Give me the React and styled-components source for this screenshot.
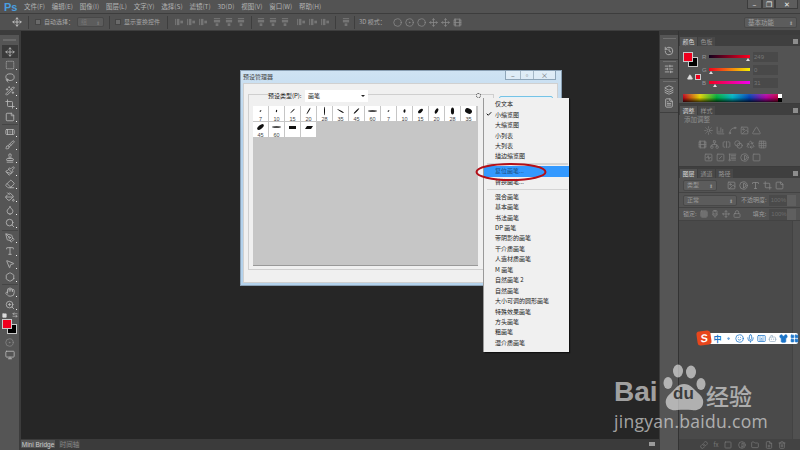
import React from 'react';
import styled, { createGlobalStyle } from 'styled-components';
import {
  Move, SquareDashed, Lasso, WandSparkles, Crop, StickyNote, Bandage, Brush, Stamp, Paintbrush, Eraser,
  PaintBucket, Droplet, Search, PenTool, Type, MousePointer2, Hexagon, Hand, ZoomIn, ArrowLeftRight,
  CircleDot, Monitor, History, SlidersHorizontal, Layers, FileText, Sun, ChartColumn, Spline, Image,
  Triangle, Film, Network, SquareSplitHorizontal, Blend, Recycle, Grid3x3, SquareActivity, SquareSlash,
  Contrast, Blinds, Link, Circle, Folder, FilePlus, Trash2, Lock, Paintbrush2, Square, Check, Smile, Mic,
  Keyboard, Shirt, LayoutGrid, Bot, Dot,
} from 'lucide-react';

const GlobalStyle = createGlobalStyle`
  html, body { margin: 0; padding: 0; background: #262626; }
  body { font-family: "Noto Sans CJK SC", "Noto Sans", sans-serif; }
  * { box-sizing: border-box; }
`;

const Page = styled.div`
  position: relative;
  width: 800px;
  height: 450px;
  overflow: hidden;
  display: flex;
  flex-direction: column;
  background: #535353;
  color: #c4c4c4;
  font-size: 6px;
  line-height: 1;
`;

const MenuBar = styled.div`
  height: 13px;
  display: flex;
  align-items: center;
  padding-left: 4px;
  background: #535353;
  font-size: 6.5px;
`;

const Logo = styled.span`
  width: 20px;
  font: bold 11px "Liberation Sans", sans-serif;
  color: #4a9fe0;
`;

const MenuItem = styled.span`
  margin-right: 6.8px;
  white-space: nowrap;
  color: #b4b4b4;
`;

const WindowControls = styled.div`
  margin-left: auto;
  margin-right: 2px;
  align-self: flex-start;
  height: 9px;
  display: flex;
`;

const WindowControl = styled.div`
  width: ${p => p.$w}px;
  display: flex;
  align-items: center;
  justify-content: center;
  background: #5d5d5d;
  border: 1px solid #3c3c3c;
  border-top: 0;
  color: #eee;
  font-size: 7px;
`;

const OptionsBar = styled.div`
  height: 18px;
  display: flex;
  align-items: center;
  padding-left: 12px;
  background: #515151;
  border-top: 1px solid #3d3d3d;
  border-bottom: 1px solid #3d3d3d;
  color: #a8a8a8;
`;

const Divider = styled.div`
  width: 1px;
  height: 13px;
  margin: 0 ${p => p.$gap ?? 5}px;
  background: #3e3e3e;
`;

const CheckBox = styled.div`
  width: 6px;
  height: 6px;
  margin-right: 3px;
  background: #6a6a6a;
  border: 1px solid #454545;
`;

const OptionLabel = styled.span`
  margin-left: ${p => p.$ml ?? 0}px;
  white-space: nowrap;
`;

const DropDown = styled.div`
  width: ${p => p.$w}px;
  height: ${p => p.$h ?? 10}px;
  margin-left: ${p => p.$ml ?? 0}px;
  padding: 0 3px;
  display: flex;
  align-items: center;
  justify-content: space-between;
  background: #5c5c5c;
  border: 1px solid #484848;
  border-radius: 2px;
  color: ${p => p.$color ?? '#9a9a9a'};
  &::after { content: '⬍'; font-size: 5px; }
`;

const AlignGroup = styled.div`
  display: flex;
  gap: 4px;
  margin-right: ${p => p.$mr ?? 0}px;
`;

const AlignMark = styled.svg`
  width: 8px;
  height: 8px;
  fill: #757575;
  transform: rotate(${p => p.$turn ?? 0}deg);
`;

const OptionIcons = styled.div`
  display: flex;
  gap: 3px;
  margin-left: 7px;
  color: #8c8c8c;
`;

const WorkspaceDrop = styled(DropDown)`
  margin-left: auto;
  margin-right: 3px;
  font-size: 6.5px;
`;

const Workspace = styled.div`
  flex: 1;
  min-height: 0;
  display: flex;
`;

const Toolbar = styled.div`
  width: 21px;
  display: flex;
  flex-direction: column;
  align-items: center;
  background: #555;
  border-right: 2px solid #3c3c3c;
`;

const GripStrip = styled.div`
  align-self: stretch;
  height: 4px;
  flex: none;
  background: #3c3c3c;
`;

const ToolHandle = styled.div`
  width: 13px;
  height: 2px;
  margin: 4px 0 4px;
  flex: none;
  background: #6a6a6a;
`;

const ToolGroup = styled.div`
  display: flex;
  flex-direction: column;
  padding-bottom: 1px;
  border-bottom: ${p => (p.$last ? '0' : '1px solid #454545')};
`;

const ToolButton = styled.div`
  position: relative;
  width: 16px;
  height: 13px;
  display: flex;
  align-items: center;
  justify-content: center;
  color: #b8b8b8;
  background: ${p => (p.$active ? '#3a3a3a' : 'transparent')};
  &::after {
    content: '';
    display: ${p => (p.$more ? 'block' : 'none')};
    position: absolute;
    right: 1px;
    bottom: 1px;
    width: 1px;
    height: 1px;
    background: #eee;
  }
`;

const MiniColors = styled.div`
  width: 16px;
  height: 6px;
  display: flex;
  justify-content: space-between;
  align-items: center;
  color: #ddd;
`;

const ColorPair = styled.div`
  position: relative;
  width: ${p => p.$size * 1.55}px;
  height: ${p => p.$size * 1.55}px;
  margin: ${p => p.$margin};
  flex: none;
`;

const ColorChip = styled.div`
  position: absolute;
  width: ${p => p.$size}px;
  height: ${p => p.$size}px;
  left: ${p => p.$offset}px;
  top: ${p => p.$offset}px;
  background: ${p => p.$color};
  border: 1px solid #c8c8c8;
`;

const CanvasColumn = styled.div`
  flex: 1;
  min-width: 0;
  display: flex;
  flex-direction: column;
`;

const Stage = styled.div`
  position: relative;
  flex: 1;
  background: #262626;
`;

const BottomTabs = styled.div`
  height: 11px;
  display: flex;
  align-items: flex-end;
  gap: 4px;
  padding-bottom: 2px;
  background: #3b3b3b;
  font: 6.5px "Liberation Sans", "Noto Sans CJK SC", sans-serif;
`;

const BottomTab = styled.div`
  width: ${p => p.$w}px;
  height: 8px;
  display: flex;
  align-items: center;
  justify-content: center;
  background: ${p => (p.$active ? '#535353' : '#444')};
  color: ${p => (p.$active ? '#ccc' : '#888')};
`;

const BottomMenu = styled.div`
  margin-left: auto;
  margin-right: 4px;
  width: 6px;
  height: 4px;
  margin-bottom: 2px;
  background: #9a9a9a;
`;

const Dock = styled.div`
  width: 20px;
  display: flex;
  flex-direction: column;
  background: #555;
  border-right: 1px solid #333;
  border-left: 1px solid #3a3a3a;
`;

const DockGroup = styled.div`
  display: flex;
  flex-direction: column;
  align-items: center;
  padding: ${p => p.$pt}px 0 ${p => p.$pb}px;
  border-bottom: 1px solid #3f3f3f;
  color: #b8b8b8;
`;

const DockHandle = styled.div`
  width: 13px;
  height: 1px;
  margin-bottom: ${p => p.$mb}px;
  background: #707070;
`;

const DockSlot = styled.div`
  height: 13px;
  display: flex;
  align-items: center;
`;

const Panels = styled.div`
  width: 121px;
  display: flex;
  flex-direction: column;
  background: #535353;
`;

const TabRow = styled.div`
  height: 11px;
  flex: none;
  display: flex;
  align-items: flex-end;
  padding: 2px 0 0 1px;
  background: #3f3f3f;
`;

const Tab = styled.div`
  width: 17px;
  height: 100%;
  margin-right: 1px;
  display: flex;
  align-items: center;
  justify-content: center;
  background: ${p => (p.$active ? '#535353' : '#484848')};
  color: ${p => (p.$active ? '#d8d8d8' : '#949494')};
`;

const TabMenu = styled.div`
  margin: auto 2px auto auto;
  width: 5px;
  height: 5px;
  background: #8d8d8d;
`;

const ColorBody = styled.div`
  height: 58px;
  flex: none;
  padding: 4px 0 0 4px;
  border-bottom: 1px solid #3c3c3c;
`;

const ColorTop = styled.div`
  height: 41px;
  display: flex;
`;

const SliderColumn = styled.div`
  flex: 1;
  padding-left: 1px;
  display: flex;
  flex-direction: column;
  color: #999;
`;

const SliderRow = styled.div`
  height: 13px;
  display: flex;
  align-items: center;
`;

const ChannelLabel = styled.span`
  width: 7px;
  font-family: "Liberation Sans", sans-serif;
`;

const SliderTrack = styled.div`
  position: relative;
  width: 41px;
  height: 3px;
  margin-right: 3px;
  background: linear-gradient(90deg, ${p => p.$from}, ${p => p.$to});
  &::after {
    content: '';
    position: absolute;
    top: 3px;
    left: ${p => p.$at}px;
    border: 2px solid transparent;
    border-top: 0;
    border-bottom: 3px solid #ddd;
  }
`;

const ValueField = styled.div`
  width: 25px;
  height: 10px;
  padding-left: 1px;
  display: flex;
  align-items: center;
  background: #494949;
  color: #777;
  font-family: "Liberation Sans", sans-serif;
`;

const GamutRow = styled.div`
  display: flex;
  align-items: center;
  gap: 2px;
  padding-left: 4px;
  color: #ddd;
`;

const SwatchColumn = styled.div`
  width: 18px;
  display: flex;
  flex-direction: column;
`;

const SmallRed = styled.div`
  width: 6px;
  height: 6px;
  background: #f0001e;
  border: 1px solid #ccc;
`;

const Spectrum = styled.div`
  position: relative;
  width: 99px;
  height: 8px;
  margin-top: 3px;
  background:
    linear-gradient(180deg, rgba(255,255,255,.12), rgba(0,0,0,0) 45%, rgba(0,0,0,.75)),
    linear-gradient(90deg, #b8001a, #e0d000 17%, #00a838 34%, #00b0c0 50%, #0040b0 67%, #b000a0 84%, #c00020);
  &::after {
    content: '';
    position: absolute;
    top: 0;
    right: 0;
    width: 4px;
    height: 8px;
    background: linear-gradient(180deg, #fff 50%, #000 50%);
  }
`;

const AdjustBody = styled.div`
  height: 52px;
  flex: none;
  border-bottom: 1px solid #3c3c3c;
`;

const AdjustTitle = styled.div`
  height: 9px;
  padding-left: 5px;
  display: flex;
  align-items: center;
  color: #8f8f8f;
  font-size: 6.5px;
`;

const AdjustRow = styled.div`
  height: 13.5px;
  padding-right: 15px;
  display: flex;
  justify-content: center;
  align-items: center;
  gap: 3px;
  color: #828282;
`;

const LayerRow = styled.div`
  height: ${p => p.$h}px;
  flex: none;
  padding-left: 4px;
  display: flex;
  align-items: center;
  border-bottom: 1px solid #434343;
  color: #9c9c9c;
`;

const LayerIcons = styled.div`
  display: flex;
  gap: ${p => p.$gap ?? 3}px;
  margin-left: ${p => p.$ml}px;
  color: #8a8a8a;
`;

const LockedField = styled.div`
  width: 27px;
  height: 11px;
  margin-left: ${p => p.$ml}px;
  padding-left: 2px;
  display: flex;
  align-items: center;
  justify-content: space-between;
  background: #4a4a4a;
  color: #6d6d6d;
  font: 6px "Liberation Sans", sans-serif;
  &::after {
    content: '';
    width: 9px;
    height: 100%;
    background: #5f5f5f;
  }
`;

const LayerList = styled.div`
  flex: 1;
  display: flex;
  justify-content: flex-end;
  background: #4a4a4a;
`;

const LayerScroll = styled.div`
  width: 8px;
  background: #505050;
  border-left: 1px solid #434343;
`;

const LayerFooter = styled.div`
  height: 11px;
  flex: none;
  display: flex;
  align-items: center;
  justify-content: flex-end;
  gap: 5.5px;
  padding-right: 14px;
  background: #434343;
  color: #7b7b7b;
`;

const Dialog = styled.div`
  position: absolute;
  left: 219px;
  top: 39px;
  width: 322px;
  height: 216px;
  padding: 0 3px 2px 2px;
  display: flex;
  flex-direction: column;
  background: linear-gradient(180deg, #cfe3f3, #b4d2ec 30%);
  border: 1px solid #8aa0b4;
  color: #222;
`;

const TitleBar = styled.div`
  height: 12px;
  flex: none;
  display: flex;
  align-items: center;
  color: #444;
`;

const TitleButtons = styled.div`
  margin-left: auto;
  align-self: flex-start;
  margin-right: 2px;
  height: 9px;
  display: flex;
  background: rgba(255,255,255,.35);
  border: 1px solid #8ea5b8;
  border-top: 0;
`;

const TitleButton = styled.div`
  width: ${p => p.$w}px;
  display: flex;
  align-items: center;
  justify-content: center;
  color: #666;
  font-size: 7px;
  border-left: 1px solid #a4b7c6;
  &:first-child { border-left: 0; }
`;

const DialogBody = styled.div`
  flex: 1;
  min-height: 0;
  display: flex;
  padding: 10px 0 12px 4px;
  background: #f0f0f0;
  border: 1px solid #d0d0d0;
`;

const GroupBox = styled.div`
  width: 246px;
  flex: none;
  display: flex;
  flex-direction: column;
  padding: 0 4px 3px 4px;
  border: 1px solid #cfcfcf;
`;

const GroupHeader = styled.div`
  height: 13px;
  margin-top: -6px;
  flex: none;
  display: flex;
  align-items: center;
  padding-left: 15px;
`;

const GroupLegend = styled.span`
  width: 37px;
  background: #f0f0f0;
  white-space: nowrap;
`;

const PresetSelect = styled.div`
  width: 63px;
  height: 12px;
  padding: 0 3px;
  display: flex;
  align-items: center;
  justify-content: space-between;
  background: #fff;
  &::after {
    content: '';
    border: 2px solid transparent;
    border-top: 2px solid #222;
    border-bottom: 0;
  }
`;

const Gear = styled.span`
  margin-left: 108px;
  width: 5px;
  height: 5px;
  background: #f0f0f0;
  border: 1.5px dotted #444;
  border-radius: 50%;
`;

const PresetArea = styled.div`
  flex: 1;
  margin-top: 4px;
  display: flex;
  min-height: 0;
`;

const PresetGrid = styled.div`
  width: 225px;
  display: grid;
  grid-template-columns: repeat(14, 16px);
  grid-auto-rows: 16px;
  align-content: start;
  background: #c6c6c6;
  border-bottom: 1px solid #999;
`;

const PresetCell = styled.div`
  display: flex;
  flex-direction: column;
  align-items: center;
  background: #fff;
  border: 1px solid #c6c6c6;
  border-width: 0 1px 1px 0;
  font: 5.5px "Liberation Sans", sans-serif;
  color: #444;
`;

const BrushTip = styled.svg`
  width: 15px;
  height: 10px;
  flex: none;
  fill: #111;
`;

const PresetScroll = styled.div`
  width: 7px;
  background: #f0f0f0;
`;

const DoneButton = styled.div`
  width: 54px;
  height: 16px;
  margin: 2px 0 0 5px;
  border: 1px solid #75c3e6;
  border-radius: 2px;
  background: #e6f2f9;
`;

const FlyoutMenu = styled.div`
  position: absolute;
  left: 484px;
  top: 98px;
  width: 85px;
  height: 254px;
  padding-top: 1px;
  background: #f0f0f0;
  box-shadow: -1px 0 0 #999, 1px 1px 1px #111;
`;

const FlyoutItem = styled.div`
  position: relative;
  height: 10.45px;
  padding-left: 11px;
  display: flex;
  align-items: center;
  white-space: nowrap;
  color: ${p => (p.$active ? '#1f4f80' : '#222')};
  background: ${p => (p.$active ? '#3399ff' : 'transparent')};
`;

const CheckMark = styled.span`
  position: absolute;
  left: 2px;
  top: 2px;
  color: #111;
`;

const FlyoutRule = styled.div`
  height: 1.5px;
  margin: 1.5px 1px 1.5px 3px;
  background: #d4d4d4;
`;

const RedCircle = styled.svg`
  position: absolute;
  left: 475px;
  top: 162px;
  width: 72px;
  height: 20px;
`;

const ImeBar = styled.div`
  position: absolute;
  left: 698px;
  top: 333px;
  width: 100px;
  height: 11px;
  padding-left: 15.5px;
  display: flex;
  align-items: center;
  gap: 2px;
  background: #fff;
  border-radius: 2px;
  color: #1b74c8;
`;

const ImeLogo = styled.div`
  position: absolute;
  left: -1px;
  top: -2px;
  width: 14px;
  height: 14px;
  display: flex;
  align-items: center;
  justify-content: center;
  background: #e8461c;
  border-radius: 3px;
  color: #fff;
  font: italic bold 11px "Liberation Sans", sans-serif;
  transform: rotate(-8deg);
`;

const ImeSlot = styled.span`
  width: 9px;
  display: flex;
  justify-content: center;
  color: ${p => p.$color ?? 'inherit'};
  font-size: 8px;
  font-weight: 700;
`;

const Watermark = styled.div`
  position: absolute;
  left: 614px;
  top: 364px;
  width: 144px;
  display: flex;
  flex-direction: column;
  color: rgba(225, 225, 225, 0.68);
`;

const WatermarkTop = styled.div`
  height: 47px;
  display: flex;
  align-items: flex-end;
`;

const BaiText = styled.span`
  width: 49px;
  margin-bottom: 5px;
  font: bold 28px/1 "Liberation Sans", sans-serif;
`;

const PawBox = styled.div`
  position: relative;
  width: 43px;
  height: 47px;
  flex: none;
`;

const PawSvg = styled.svg`
  width: 43px;
  height: 47px;
  fill: rgba(225, 225, 225, 0.68);
`;

const PawLabel = styled.span`
  position: absolute;
  left: 10px;
  top: 21px;
  color: #3c3c3c;
  font: bold 17px/1 "Liberation Sans", sans-serif;
`;

const JingyanMark = styled.span`
  margin-bottom: 4px;
  font: 500 23px/1 "Noto Sans CJK SC", sans-serif;
`;

const WatermarkUrl = styled.div`
  margin-top: 2px;
  font: 17.5px/1 "Open Sans", sans-serif;
  letter-spacing: .3px;
  white-space: nowrap;
`;

const menus = ['文件(F)', '编辑(E)', '图像(I)', '图层(L)', '文字(Y)', '选择(S)', '滤镜(T)', '3D(D)', '视图(V)', '窗口(W)', '帮助(H)'];

const toolGroups = [
  [Move, SquareDashed, Lasso, WandSparkles, Crop, StickyNote],
  [Bandage, Brush, Stamp, Paintbrush, Eraser, PaintBucket, Droplet, Search],
  [PenTool, Type, MousePointer2, Hexagon],
  [Hand, ZoomIn],
];

const adjustRows = [
  [Sun, ChartColumn, Spline, Image, Triangle],
  [Film, Network, SquareSplitHorizontal, Blend, Recycle, Grid3x3],
  [SquareActivity, SquareSlash, Blinds, Contrast, Square],
];

const brushes = [
  [7, 1, 0.6, -40], [10, 1.3, 0.6, -75], [15, 3, 0.5, -45], [20, 3.6, 0.5, -60], [28, 4.2, 0.5, 90],
  [35, 3.8, 0.5, 30], [45, 3.8, 0.6, -45], [60, 4.6, 0.7, 0], [7, 1, 0.6, -40], [10, 1.7, 1, -80],
  [15, 3, 1.5, -40], [20, 3, 1.4, -60], [28, 3.6, 1.6, 90], [35, 3.6, 2.6, 25], [45, 4, 1.8, -40], [60, 4.6, 0.8, 0],
];

const flyoutTop = [{ t: '仅文本' }, { t: '小缩览图', checked: true }, { t: '大缩览图' }, { t: '小列表' }, { t: '大列表' }, { t: '描边缩览图' }];
const flyoutSets = ['混合画笔', '基本画笔', '书法画笔', 'DP 画笔', '带阴影的画笔', '干介质画笔', '人造材质画笔', 'M 画笔', '自然画笔 2', '自然画笔', '大小可调的圆形画笔', '特殊效果画笔', '方头画笔', '粗画笔', '湿介质画笔'];

const AlignIcon = ({ turn }) => (
  <AlignMark viewBox="0 0 9 9" $turn={turn}>
    <rect x="0" y="1" width="1" height="7" />
    <rect x="2" y="1" width="3" height="7" />
    <rect x="6" y="3" width="3" height="3" />
  </AlignMark>
);

const AlignSet = ({ turn, mr }) => (
  <AlignGroup $mr={mr}>
    {[0, 1, 2].map(i => <AlignIcon key={i} turn={turn} />)}
  </AlignGroup>
);

const App = () => (
  <Page>
    <GlobalStyle />
    <MenuBar>
      <Logo>Ps</Logo>
      {menus.map(m => <MenuItem key={m}>{m}</MenuItem>)}
      <WindowControls>
        <WindowControl $w={15}>–</WindowControl>
        <WindowControl $w={13}>❐</WindowControl>
        <WindowControl $w={23}>✕</WindowControl>
      </WindowControls>
    </MenuBar>

    <OptionsBar>
      <Move size={10} color="#c8c8c8" />
      <Divider $gap={6} />
      <CheckBox />
      <OptionLabel>自动选择：</OptionLabel>
      <DropDown $w={27} $ml={3} $color="#777">组</DropDown>
      <Divider $gap={5} />
      <CheckBox />
      <OptionLabel>显示变换控件</OptionLabel>
      <Divider $gap={7} />
      <AlignSet turn={0} mr={6} />
      <AlignSet turn={90} />
      <Divider $gap={5.5} />
      <AlignSet turn={90} mr={8} />
      <AlignSet turn={0} />
      <Divider $gap={6} />
      <AlignGroup><AlignIcon turn={90} /></AlignGroup>
      <Divider $gap={4} />
      <OptionLabel>3D 模式：</OptionLabel>
      <OptionIcons>
        <Circle size={9} />
        <CircleDot size={9} />
        <Circle size={9} />
        <Move size={9} />
        <Move size={9} />
        <Film size={9} />
      </OptionIcons>
      <WorkspaceDrop $w={53} $h={11} $color="#a0a0a0">基本功能</WorkspaceDrop>
    </OptionsBar>

    <Workspace>
      <Toolbar>
        <GripStrip />
        <ToolHandle />
        {toolGroups.map((group, g) => (
          <ToolGroup key={g} $last={g === toolGroups.length - 1}>
            {group.map((Icon, i) => (
              <ToolButton key={i} $active={g === 0 && i === 0} $more={i > 0 || g > 0}>
                <Icon size={10} strokeWidth={2} />
              </ToolButton>
            ))}
          </ToolGroup>
        ))}
        <MiniColors>
          <Square size={5} fill="#ddd" />
          <ArrowLeftRight size={6} />
        </MiniColors>
        <ColorPair $size={10} $margin="1px 0 1px 0">
          <ColorChip $size={10} $offset={5} $color="#000" />
          <ColorChip $size={10} $offset={0} $color="#f0001e" />
        </ColorPair>
        <ToolButton><CircleDot size={9} color="#888" /></ToolButton>
        <ToolButton><Monitor size={10} /></ToolButton>
      </Toolbar>

      <CanvasColumn>
        <Stage>
          <Dialog>
            <TitleBar>
              预设管理器
              <TitleButtons>
                <TitleButton $w={14}>–</TitleButton>
                <TitleButton $w={13}>▫</TitleButton>
                <TitleButton $w={22}>×</TitleButton>
              </TitleButtons>
            </TitleBar>
            <DialogBody>
              <GroupBox>
                <GroupHeader>
                  <GroupLegend>预设类型(P):</GroupLegend>
                  <PresetSelect>画笔</PresetSelect>
                  <Gear />
                </GroupHeader>
                <PresetArea>
                  <PresetGrid>
                    {brushes.map(([size, rx, ry, angle], i) => (
                      <PresetCell key={i}>
                        <BrushTip viewBox="0 0 15 10">
                          <ellipse cx="7.5" cy="5" rx={rx} ry={ry} transform={`rotate(${angle} 7.5 5)`} />
                        </BrushTip>
                        {size}
                      </PresetCell>
                    ))}
                    <PresetCell>
                      <BrushTip viewBox="0 0 15 10"><rect x="4" y="4" width="7" height="3" /></BrushTip>
                    </PresetCell>
                    <PresetCell>
                      <BrushTip viewBox="0 0 15 10"><polygon points="4,7 6,4 12,4 10,7" /></BrushTip>
                    </PresetCell>
                  </PresetGrid>
                  <PresetScroll />
                </PresetArea>
              </GroupBox>
              <DoneButton />
            </DialogBody>
          </Dialog>
        </Stage>
        <BottomTabs>
          <BottomTab $w={34} $active>Mini Bridge</BottomTab>
          <BottomTab $w={21}>时间轴</BottomTab>
          <BottomMenu />
        </BottomTabs>
      </CanvasColumn>

      <Dock>
        <GripStrip />
        <DockGroup $pt={3} $pb={2}><DockHandle $mb={5} /><DockSlot><History size={10} /></DockSlot></DockGroup>
        <DockGroup $pt={1} $pb={3}><DockHandle $mb={0} /><DockSlot><SlidersHorizontal size={10} /></DockSlot></DockGroup>
        <DockGroup $pt={2} $pb={3}>
          <DockHandle $mb={1} />
          <DockSlot><Layers size={10} /></DockSlot>
          <DockSlot><FileText size={10} /></DockSlot>
        </DockGroup>
      </Dock>

      <Panels>
        <GripStrip />
        <TabRow>
          <Tab $active>颜色</Tab>
          <Tab>色板</Tab>
          <TabMenu />
        </TabRow>
        <ColorBody>
          <ColorTop>
            <SwatchColumn>
              <ColorPair $size={9} $margin="2px 0 8px 0">
                <ColorChip $size={10} $offset={5} $color="#000" />
                <ColorChip $size={10} $offset={0} $color="#f0001e" />
              </ColorPair>
              <GamutRow>
                <Triangle size={6} fill="#ddd" />
                <SmallRed />
              </GamutRow>
            </SwatchColumn>
            <SliderColumn>
              <SliderRow>
                <ChannelLabel>R</ChannelLabel>
                <SliderTrack $from="#12001c" $to="#ff0020" $at={37} />
                <ValueField>249</ValueField>
              </SliderRow>
              <SliderRow>
                <ChannelLabel>G</ChannelLabel>
                <SliderTrack $from="#f0001e" $to="#f4f000" $at={0} />
                <ValueField>0</ValueField>
              </SliderRow>
              <SliderRow>
                <ChannelLabel>B</ChannelLabel>
                <SliderTrack $from="#f0001e" $to="#f000f0" $at={4} />
                <ValueField>31</ValueField>
              </SliderRow>
            </SliderColumn>
          </ColorTop>
          <Spectrum />
        </ColorBody>
        <TabRow>
          <Tab $active>调整</Tab>
          <Tab>样式</Tab>
          <TabMenu />
        </TabRow>
        <AdjustBody>
          <AdjustTitle>添加调整</AdjustTitle>
          {adjustRows.map((row, r) => (
            <AdjustRow key={r}>
              {row.map((Icon, i) => <Icon key={i} size={9} />)}
            </AdjustRow>
          ))}
        </AdjustBody>
        <TabRow>
          <Tab $active>图层</Tab>
          <Tab>通道</Tab>
          <Tab>路径</Tab>
          <TabMenu />
        </TabRow>
        <LayerRow $h={15}>
          <DropDown $w={34} $h={11}>类型</DropDown>
          <LayerIcons $ml={10} $gap={3}>
            <Image size={9} />
            <Contrast size={9} />
            <Type size={9} />
            <Crop size={9} />
            <StickyNote size={9} />
          </LayerIcons>
        </LayerRow>
        <LayerRow $h={15}>
          <DropDown $w={54} $h={11}>正常</DropDown>
          <OptionLabel $ml={4}>不透明度:</OptionLabel>
          <LockedField $ml={2}>100%</LockedField>
        </LayerRow>
        <LayerRow $h={13}>
          <OptionLabel>锁定:</OptionLabel>
          <LayerIcons $ml={3} $gap={3}>
            <Grid3x3 size={8} />
            <Paintbrush2 size={8} />
            <Move size={8} />
            <Lock size={8} />
          </LayerIcons>
          <OptionLabel $ml={12}>填充:</OptionLabel>
          <LockedField $ml={3}>100%</LockedField>
        </LayerRow>
        <LayerList><LayerScroll /></LayerList>
        <LayerFooter>
          <Link size={8} />
          <span>fx</span>
          <Square size={8} />
          <Contrast size={8} />
          <Folder size={8} />
          <FilePlus size={8} />
          <Trash2 size={8} />
        </LayerFooter>
      </Panels>
    </Workspace>

    <FlyoutMenu>
      {flyoutTop.map(item => (
        <FlyoutItem key={item.t}>
          {item.checked && <CheckMark><Check size={6} strokeWidth={4} /></CheckMark>}
          {item.t}
        </FlyoutItem>
      ))}
      <FlyoutRule />
      <FlyoutItem $active>复位画笔...</FlyoutItem>
      <FlyoutItem>替换画笔...</FlyoutItem>
      <FlyoutRule />
      {flyoutSets.map(t => <FlyoutItem key={t}>{t}</FlyoutItem>)}
    </FlyoutMenu>

    <RedCircle viewBox="0 0 72 20">
      <ellipse cx="36" cy="10" rx="34.5" ry="8" fill="none" stroke="#b30f18" strokeWidth="2" />
    </RedCircle>

    <Watermark>
      <WatermarkTop>
        <BaiText>Bai</BaiText>
        <PawBox>
          <PawSvg viewBox="0 0 43 47">
            <ellipse cx="5" cy="19" rx="4.5" ry="6" />
            <ellipse cx="15" cy="7" rx="5" ry="6.5" />
            <ellipse cx="28" cy="8" rx="5" ry="6.5" />
            <ellipse cx="38" cy="20" rx="4.5" ry="6" />
            <path d="M21 20c-6 0-9 5-13 9-4 3-6 7-5 11 1 5 6 7 11 6 5-.5 10-.5 15 0 5 1 10-1 11-6 1-4-1-8-5-11-4-4-8-9-14-9z" />
          </PawSvg>
          <PawLabel>du</PawLabel>
        </PawBox>
        <JingyanMark>经验</JingyanMark>
      </WatermarkTop>
      <WatermarkUrl>jingyan.baidu.com</WatermarkUrl>
    </Watermark>

    <ImeBar>
      <ImeLogo>S</ImeLogo>
      <ImeSlot>中</ImeSlot>
      <ImeSlot><Dot size={9} strokeWidth={4} /></ImeSlot>
      <ImeSlot><Smile size={9} /></ImeSlot>
      <ImeSlot><Mic size={9} /></ImeSlot>
      <ImeSlot><Keyboard size={9} /></ImeSlot>
      <ImeSlot $color="#9db4c8"><Bot size={9} /></ImeSlot>
      <ImeSlot><Shirt size={9} fill="#1b74c8" /></ImeSlot>
      <ImeSlot><LayoutGrid size={9} fill="#1b74c8" /></ImeSlot>
    </ImeBar>
  </Page>
);

export default App;
